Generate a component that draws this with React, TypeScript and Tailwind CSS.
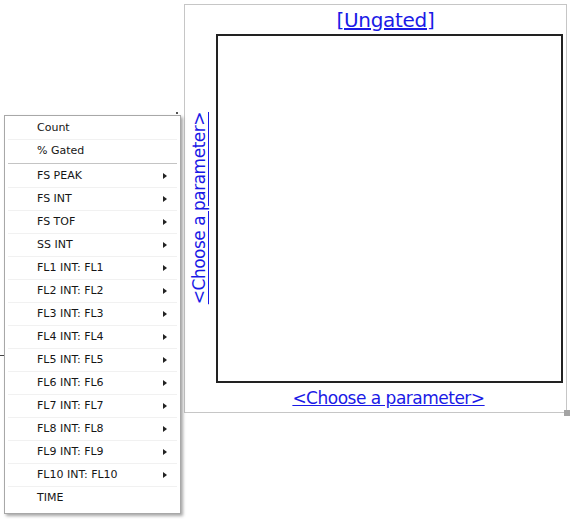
const PARAMS = [
  "FS PEAK",
  "FS INT",
  "FS TOF",
  "SS INT",
  "FL1 INT: FL1",
  "FL2 INT: FL2",
  "FL3 INT: FL3",
  "FL4 INT: FL4",
  "FL5 INT: FL5",
  "FL6 INT: FL6",
  "FL7 INT: FL7",
  "FL8 INT: FL8",
  "FL9 INT: FL9",
  "FL10 INT: FL10",
];

function MenuRow({ label, sub }: { label: string; sub?: boolean }) {
  return (
    <div className="flex h-[23px] items-center justify-between border-b border-[#f1f1f1] mx-[3px] pl-[29px] pr-[10px]">
      <span>{label}</span>
      {sub && (
        <span className="h-0 w-0 border-y-[3px] border-l-[4px] border-y-transparent border-l-[#222]" />
      )}
    </div>
  );
}

function ContextMenu() {
  return (
    <div className="absolute left-[4px] top-[115px] w-[177px] border border-[#a8a8a8] bg-white pt-[1px] pb-[3px] text-[11px] text-[#161616] shadow-[2px_2px_3px_rgba(0,0,0,0.35)] [font-family:'DejaVu_Sans',sans-serif]">
      <MenuRow label="Count" />
      <div className="flex h-[23px] items-center mx-[3px] pl-[29px]">% Gated</div>
      <div className="mx-[3px] h-[2px] border-t border-[#c4c4c4]" />
      {PARAMS.map((p) => (
        <MenuRow key={p} label={p} sub />
      ))}
      <div className="flex h-[23px] items-center mx-[3px] pl-[29px]">TIME</div>
    </div>
  );
}

export default function App() {
  return (
    <div className="relative h-[519px] w-[570px] overflow-hidden bg-white [font-family:'DejaVu_Sans',sans-serif]">
      {/* plot window */}
      <div className="relative ml-[184px] mt-[4px] flex h-[409px] w-[383px] flex-col border border-[#c6c6c6]">
        <div className="flex h-[29px] items-center justify-center pl-[20px]">
          <a href="#" className="text-[20px] leading-none text-[#1a1ae6] underline tracking-[-0.3px]">
            [Ungated]
          </a>
        </div>
        <div className="flex">
          <div className="flex w-[31px] items-center justify-center pr-[2px]">
            <a
              href="#"
              className="rotate-180 text-[17px] leading-none text-[#1a1ae6] underline tracking-[-0.5px] [writing-mode:vertical-rl]"
            >
              &lt;Choose a parameter&gt;
            </a>
          </div>
          <div className="h-[349px] w-[347px] border-2 border-[#222]" />
        </div>
        <div className="flex flex-1 items-center justify-center pl-[26px] pt-[2px]">
          <a href="#" className="text-[17px] leading-none text-[#1a1ae6] underline tracking-[-0.5px]">
            &lt;Choose a parameter&gt;
          </a>
        </div>
        <div className="absolute -bottom-[4px] -right-[4px] h-[6px] w-[6px] bg-[#a4a4a4]" />
      </div>

      <div className="absolute left-0 top-[355px] h-[1px] w-[6px] bg-[#444]" />
      <div className="absolute left-[176px] top-[112px] h-[2px] w-[2px] bg-[#555]" />
      <ContextMenu />
    </div>
  );
}
